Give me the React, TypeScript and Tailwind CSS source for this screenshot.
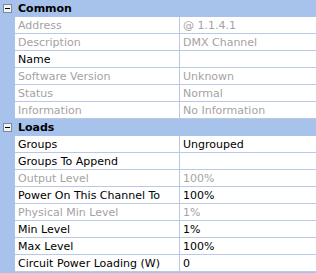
import React from "react";

type Row = { name: string; value: string; disabled?: boolean };

const common: Row[] = [
  { name: "Address", value: "@ 1.1.4.1", disabled: true },
  { name: "Description", value: "DMX Channel", disabled: true },
  { name: "Name", value: "" },
  { name: "Software Version", value: "Unknown", disabled: true },
  { name: "Status", value: "Normal", disabled: true },
  { name: "Information", value: "No Information", disabled: true },
];

const loads: Row[] = [
  { name: "Groups", value: "Ungrouped" },
  { name: "Groups To Append", value: "" },
  { name: "Output Level", value: "100%", disabled: true },
  { name: "Power On This Channel To", value: "100%" },
  { name: "Physical Min Level", value: "1%", disabled: true },
  { name: "Min Level", value: "1%" },
  { name: "Max Level", value: "100%" },
  { name: "Circuit Power Loading (W)", value: "0" },
];

function Header({ title }: { title: string }) {
  return (
    <div className="flex h-[17px] items-center bg-[#a7c3eb]">
      <div className="flex w-[15px] justify-center">
        <div className="flex h-[9px] w-[9px] items-center justify-center border border-[#7b8a9e] bg-[#f4f4f4]">
          <div className="h-px w-[5px] bg-black" />
        </div>
      </div>
      <div className="pl-[3px] text-[11px] font-bold leading-none text-[#000000]">{title}</div>
    </div>
  );
}

function PropRow({ row }: { row: Row }) {
  const color = row.disabled ? "text-[#a3a3a3]" : "text-black";
  return (
    <div className="flex h-[17px]">
      <div className="w-[15px] shrink-0 bg-[#a7c3eb]" />
      <div className={`flex w-[164px] shrink-0 items-center border-b border-[#b9c9e3] bg-white pl-[3px] text-[11px] leading-none ${color}`}>
        {row.name}
      </div>
      <div className={`flex flex-1 items-center border-b border-l border-[#b9c9e3] bg-white pl-[3px] text-[11px] leading-none ${color}`}>
        {row.value}
      </div>
    </div>
  );
}

export default function App() {
  return (
    <div
      className="h-[273px] w-[316px] overflow-hidden bg-[#a7c3eb]"
      style={{ fontFamily: "Tahoma, 'DejaVu Sans', 'Liberation Sans', sans-serif" }}
    >
      <Header title="Common" />
      {common.map((r) => (
        <PropRow key={r.name} row={r} />
      ))}
      <Header title="Loads" />
      {loads.map((r) => (
        <PropRow key={r.name} row={r} />
      ))}
    </div>
  );
}
